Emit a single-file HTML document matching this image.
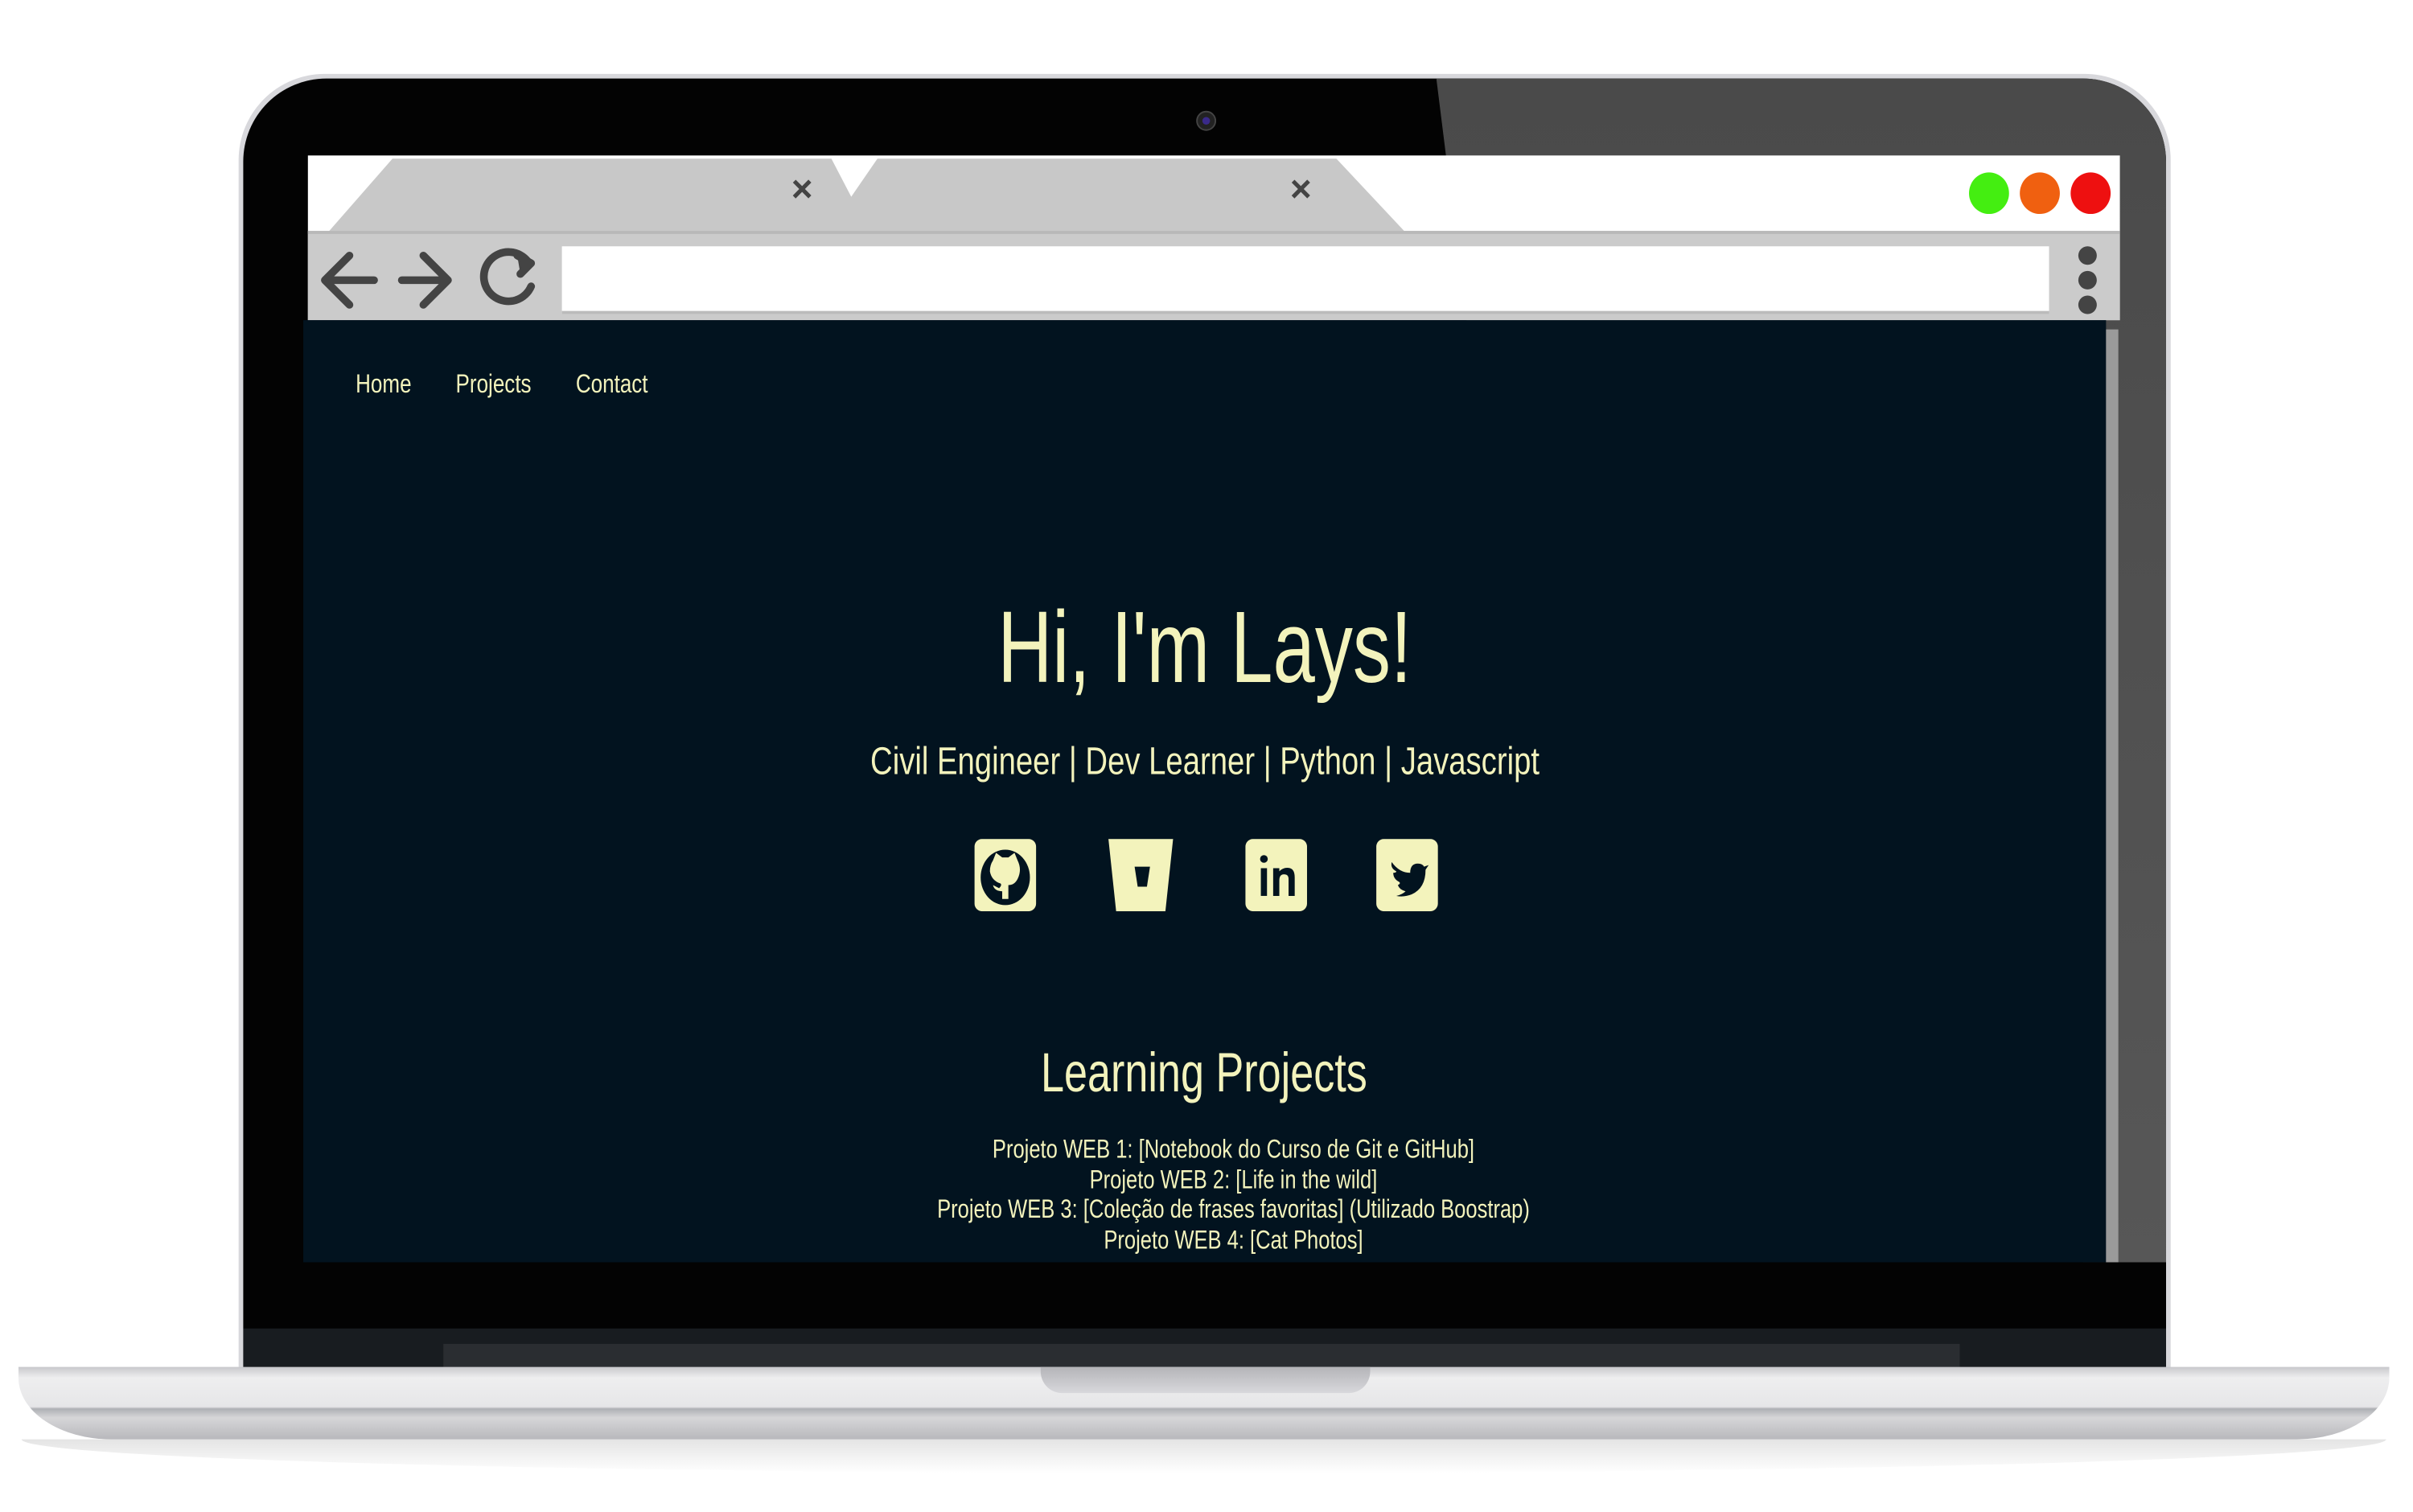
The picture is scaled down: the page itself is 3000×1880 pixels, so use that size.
<!DOCTYPE html>
<html><head><meta charset="utf-8"><style>
html,body{margin:0;padding:0;background:#fff;width:3000px;height:1880px;overflow:hidden}
#s{position:absolute;left:0;top:0;width:1570px;height:982px;transform:scale(1.914);transform-origin:0 0;font-family:"Liberation Sans",sans-serif}
.a{position:absolute}
.t{color:#f3f3bc;text-align:center;white-space:nowrap}
.c{display:inline-block;transform:scaleX(0.8)}
</style></head><body><div id="s">
<div class="a" style="left:14px;top:935px;width:1536px;height:22px;background:linear-gradient(#e4e4e4,#fff);border-radius:0 0 50% 50%/0 0 100% 100%"></div>
<div class="a" style="left:155px;top:48px;width:1255px;height:845px;background:#d8d8dc;border-radius:56px 56px 0 0"></div>
<div class="a" style="left:158px;top:51px;width:1249px;height:840px;background:#030303;border-radius:54px 54px 0 0;overflow:hidden">
  <div class="a" style="left:775px;top:0;width:500px;height:769px;background:linear-gradient(#4a4a4a,#575757);clip-path:polygon(0 0,100% 0,100% 100%,420px 100%,420px 160px,20px 160px)"></div>
  <div class="a" style="left:0;top:812px;width:1249px;height:30px;background:#181c20"></div>
  <div class="a" style="left:130px;top:822px;width:985px;height:20px;background:#2a2d31"></div>
</div>
<div class="a" style="left:777px;top:72px;width:11px;height:11px;border-radius:50%;background:#222;border:1px solid #444"><div class="a" style="left:3px;top:3px;width:5px;height:5px;border-radius:50%;background:#3a2a8a"></div></div>
<div class="a" style="left:200px;top:101px;width:1177px;height:107px;background:#fff"></div>
<div class="a" style="left:213px;top:103px;width:352px;height:48px;background:#c8c8c8;clip-path:polygon(42px 0,327px 0,100% 100%,0 100%)"></div>
<div class="a" style="left:537px;top:103px;width:376px;height:48px;background:#c8c8c8;clip-path:polygon(33px 0,331px 0,100% 100%,0 100%)"></div>
<div class="a" style="left:514px;top:110px;font:bold 24px 'Liberation Sans';color:#444">×</div>
<div class="a" style="left:838px;top:110px;font:bold 24px 'Liberation Sans';color:#444">×</div>
<div class="a" style="left:1279px;top:112px;width:26px;height:27px;border-radius:50%;background:#44ee11"></div>
<div class="a" style="left:1312px;top:112px;width:26px;height:27px;border-radius:50%;background:#f06010"></div>
<div class="a" style="left:1345px;top:112px;width:26px;height:27px;border-radius:50%;background:#ee1010"></div>
<div class="a" style="left:200px;top:150px;width:1177px;height:58px;background:#cbcbcb;border-top:2px solid #b8b8b8;box-sizing:border-box"></div>
<div class="a" style="left:365px;top:160px;width:966px;height:44px;background:#fff;border-bottom:2px solid #bbb;box-sizing:border-box"></div>
<svg class="a" style="left:205px;top:160px" width="150" height="44" viewBox="0 0 150 44" fill="none" stroke="#444" stroke-width="5" stroke-linecap="round" stroke-linejoin="round">
<path d="M38 22H8M22 6L6 22L22 38"/><path d="M56 22H84M70 6L86 22L70 38"/><path d="M138 10A16 16 0 1 0 140 26"/><path d="M131 6L140 11L133 18" fill="#444"/>
</svg>
<div class="a" style="left:1350px;top:160px;width:12px;height:12px;border-radius:50%;background:#444"></div>
<div class="a" style="left:1350px;top:176px;width:12px;height:12px;border-radius:50%;background:#444"></div>
<div class="a" style="left:1350px;top:192px;width:12px;height:12px;border-radius:50%;background:#444"></div>
<div class="a" style="left:197px;top:208px;width:1171px;height:612px;background:#02131f"></div>
<div class="a" style="left:1368px;top:214px;width:8px;height:606px;background:#9a9a9a"></div>
<div class="a t" style="left:231px;top:240px;font-size:17px;text-align:left"><span class="c" style="transform-origin:0 0">Home</span></div>
<div class="a t" style="left:296px;top:240px;font-size:17px;text-align:left"><span class="c" style="transform-origin:0 0">Projects</span></div>
<div class="a t" style="left:374px;top:240px;font-size:17px;text-align:left"><span class="c" style="transform-origin:0 0">Contact</span></div>
<div class="a t" style="left:197px;width:1171px;top:382px;font-size:66px;line-height:76px"><span class="c" style="transform:scaleX(0.745)">Hi, I'm Lays!</span></div>
<div class="a t" style="left:197px;width:1171px;top:480px;font-size:25px;line-height:30px"><span class="c">Civil Engineer | Dev Learner | Python | Javascript</span></div>
<svg class="a" style="left:633px;top:545px" width="305" height="47" viewBox="0 0 305 47">
<g fill="#f3f3bc">
<rect x="0" y="0" width="40" height="47" rx="5"/>
<path d="M87 0H129L124 47H92Z"/>
<rect x="176" y="0" width="40" height="47" rx="5"/>
<rect x="261" y="0" width="40" height="47" rx="5"/>
</g>
<g fill="#02131f">
<ellipse cx="20" cy="25" rx="16" ry="18"/>
<path d="M12 14L14 9L18 12H22L26 9L28 14Q31 20 28 26Q26 30 22 30V39H18V34Q13 34 12 30L16 32Q18 30 17 29Q11 27 10 21Q10 17 12 14Z" fill="#f3f3bc"/>
<path d="M104 18H114L112 31H106Z"/>
<rect x="186" y="19" width="4" height="18"/><circle cx="188" cy="13" r="2.5"/>
<path d="M194 19H198V21Q201 18 205 19Q208 20 208 25V37H204V26Q204 23 201 23Q198 23 198 27V37H194Z"/>
<path d="M271 15Q276 22 283 22Q283 16 288 16Q291 16 292 18L295 17L293 20Q293 32 284 36Q279 38 274 37Q278 36 280 34Q276 33 275 30Q277 29 276 28Q272 26 272 22Q274 22 274 21Q270 19 271 15Z"/>
</g>
</svg>
<div class="a t" style="left:197px;width:1171px;top:676px;font-size:36px;line-height:42px"><span class="c" style="transform:scaleX(0.757)">Learning Projects</span></div>
<div class="a t" style="left:216px;width:1171px;top:737px;font-size:17px;line-height:19.5px"><span class="c" style="transform:scaleX(0.785)">Projeto WEB 1: [Notebook do Curso de Git e GitHub]<br>Projeto WEB 2: [Life in the wild]<br>Projeto WEB 3: [Coleção de frases favoritas] (Utilizado Boostrap)<br>Projeto WEB 4: [Cat Photos]</span></div>
<div class="a" style="left:12px;top:888px;width:1540px;height:47px;background:linear-gradient(#c8c8cc,#eeeeef 15%,#e6e6e8 55%,#aeb0b4 58%,#d6d6d8 70%,#b8b8bc);border-radius:0 0 60px 60px/0 0 40px 40px"></div>
<div class="a" style="left:676px;top:888px;width:214px;height:17px;background:linear-gradient(#b4b4b8,#d8d8dc);border-radius:0 0 14px 14px"></div>
</div></body></html>
